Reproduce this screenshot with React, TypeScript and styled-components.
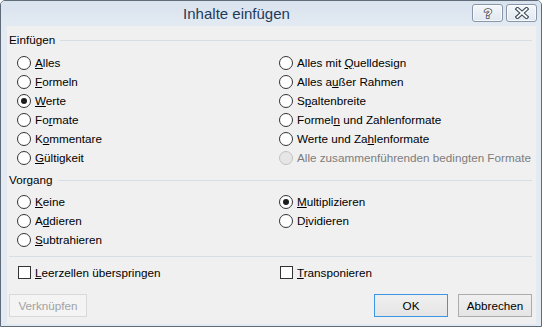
import React from "react";
import styled, { createGlobalStyle } from "styled-components";

const Global = createGlobalStyle`
  html, body { margin: 0; padding: 0; background: #ffffff; }
  body { font-family: "Liberation Sans", Arial, sans-serif; font-size: 11.7px; color: #000; }
  * { box-sizing: border-box; }
`;

const Window = styled.div`
  width: 542px;
  height: 327px;
  border: 1px solid #5f6b78;
  border-radius: 5px 5px 0 0;
  background: #e3eaf2;
  display: flex;
  flex-direction: column;
  overflow: hidden;
`;

const TitleBar = styled.div`
  height: 25px;
  flex: none;
  display: flex;
  align-items: flex-start;
  padding-right: 4px;
  background: linear-gradient(#d9e3ee, #e3eaf2);
`;

const Title = styled.div`
  flex: 1;
  text-align: center;
  font-size: 15px;
  line-height: 25px;
  color: #1f3a5a;
`;

const CaptionButtons = styled.div`
  display: flex;
  gap: 3px;
  margin-top: 3px;
`;

const CaptionButton = styled.div`
  width: 31px;
  height: 18px;
  border: 1px solid #8796a9;
  border-radius: 3px;
  background: linear-gradient(#f4f7fa, #e1e8f0);
  box-shadow: inset 0 0 0 1px rgba(255, 255, 255, 0.7);
  display: flex;
  align-items: center;
  justify-content: center;
`;

const Client = styled.div`
  flex: 1;
  margin: 0 5px 2px 6px;
  background: #f0f0f0;
  padding: 6px 4px 0 2px;
  display: flex;
  flex-direction: column;
`;

const GroupHeader = styled.div<{ $top?: number }>`
  height: 16px;
  display: flex;
  align-items: center;
  margin-top: ${(p) => p.$top ?? 0}px;
`;

const GroupLabel = styled.span`
  line-height: 16px;
`;

const GroupLine = styled.div`
  flex: 1;
  height: 1px;
  margin-left: 5px;
  background: #d5dfe5;
`;

const OptionGrid = styled.div<{ $rows: number; $top: number }>`
  display: grid;
  grid-template-columns: 262px 1fr;
  grid-template-rows: repeat(${(p) => p.$rows}, 19px);
  grid-auto-flow: column;
  padding-left: 8px;
  margin-top: ${(p) => p.$top}px;
`;

const Option = styled.label<{ $disabled?: boolean }>`
  display: flex;
  align-items: center;
  gap: 4px;
  height: 19px;
  white-space: nowrap;
  color: ${(p) => (p.$disabled ? "#7d7d7d" : "#000")};
`;

const RadioCircle = styled.span<{ $checked?: boolean; $disabled?: boolean }>`
  width: 14px;
  height: 14px;
  flex: none;
  border-radius: 50%;
  border: 1px solid ${(p) => (p.$disabled ? "#c2c2c2" : "#333333")};
  background: ${(p) => (p.$disabled ? "#e6e6e6" : "#ffffff")};
  display: flex;
  align-items: center;
  justify-content: center;
  &::after {
    content: "";
    display: ${(p) => (p.$checked ? "block" : "none")};
    width: 6px;
    height: 6px;
    border-radius: 50%;
    background: #1c1c1c;
  }
`;

const CheckBox = styled.span`
  width: 13px;
  height: 13px;
  flex: none;
  border: 1px solid #333333;
  background: #ffffff;
`;

const Key = styled.u`
  text-decoration: underline;
  text-underline-offset: 1px;
`;

const Separator = styled.div`
  height: 1px;
  background: #d5dfe5;
  margin-top: 7px;
`;

const CheckRow = styled.div`
  display: grid;
  grid-template-columns: 262px 1fr;
  padding-left: 9px;
  margin-top: 6px;
`;

const ButtonRow = styled.div`
  display: flex;
  gap: 10px;
  margin-top: 12px;
`;

const Button = styled.div<{ $w: number; $variant?: "default" | "disabled" }>`
  width: ${(p) => p.$w}px;
  height: 23px;
  display: flex;
  align-items: center;
  justify-content: center;
  border: 1px solid
    ${(p) =>
      p.$variant === "default" ? "#3b97e6" : p.$variant === "disabled" ? "#d9d9d9" : "#acacac"};
  background: ${(p) =>
    p.$variant === "disabled" ? "#f4f4f4" : "linear-gradient(#f0f0f0, #e5e5e5)"};
  color: ${(p) => (p.$variant === "disabled" ? "#a2a2a2" : "#000")};
`;

const Spacer = styled.div`
  flex: 1;
`;

type Opt = { label: React.ReactNode; checked?: boolean; disabled?: boolean };

const k = (before: string, key: string, after: string) => (
  <>
    {before}
    <Key>{key}</Key>
    {after}
  </>
);

const pasteOptions: Opt[] = [
  { label: k("", "A", "lles") },
  { label: k("", "F", "ormeln") },
  { label: k("", "W", "erte"), checked: true },
  { label: k("Fo", "r", "mate") },
  { label: k("K", "o", "mmentare") },
  { label: k("", "G", "ültigkeit") },
  { label: k("Alles mit ", "Q", "uelldesign") },
  { label: k("Alles a", "u", "ßer Rahmen") },
  { label: k("S", "p", "altenbreite") },
  { label: k("Formel", "n", " und Zahlenformate") },
  { label: k("Werte und Za", "h", "lenformate") },
  { label: "Alle zusammenführenden bedingten Formate", disabled: true },
];

const opOptions: Opt[] = [
  { label: k("", "K", "eine") },
  { label: k("A", "d", "dieren") },
  { label: k("", "S", "ubtrahieren") },
  { label: k("", "M", "ultiplizieren"), checked: true },
  { label: k("D", "i", "vidieren") },
];

const Radio = ({ o }: { o: Opt }) => (
  <Option $disabled={o.disabled}>
    <RadioCircle $checked={o.checked} $disabled={o.disabled} />
    <span>{o.label}</span>
  </Option>
);

export default function App() {
  return (
    <>
      <Global />
      <Window>
        <TitleBar>
          <Title>Inhalte einfügen</Title>
          <CaptionButtons>
            <CaptionButton>
              <svg width="14" height="14" viewBox="0 0 14 14">
                <text
                  x="7"
                  y="12"
                  textAnchor="middle"
                  fontFamily="Liberation Sans, Arial, sans-serif"
                  fontWeight="bold"
                  fontSize="13"
                  fill="#ffffff"
                  stroke="#3d4b5c"
                  strokeWidth="1.6"
                  paintOrder="stroke"
                >
                  ?
                </text>
              </svg>
            </CaptionButton>
            <CaptionButton>
              <svg width="14" height="12" viewBox="0 0 14 12">
                <path d="M2.5 2 L11.5 10 M11.5 2 L2.5 10" stroke="#3d4b5c" strokeWidth="4" strokeLinecap="square" fill="none" />
                <path d="M2.5 2 L11.5 10 M11.5 2 L2.5 10" stroke="#ffffff" strokeWidth="1.8" strokeLinecap="square" fill="none" />
              </svg>
            </CaptionButton>
          </CaptionButtons>
        </TitleBar>
        <Client>
          <GroupHeader>
            <GroupLabel>Einfügen</GroupLabel>
            <GroupLine />
          </GroupHeader>
          <OptionGrid $rows={6} $top={5}>
            {pasteOptions.map((o, i) => (
              <Radio key={i} o={o} />
            ))}
          </OptionGrid>
          <GroupHeader $top={5}>
            <GroupLabel>Vorgang</GroupLabel>
            <GroupLine />
          </GroupHeader>
          <OptionGrid $rows={3} $top={4}>
            {opOptions.map((o, i) => (
              <Radio key={i} o={o} />
            ))}
          </OptionGrid>
          <Separator />
          <CheckRow>
            <Option>
              <CheckBox />
              <span>{k("", "L", "eerzellen überspringen")}</span>
            </Option>
            <Option>
              <CheckBox />
              <span>{k("", "T", "ransponieren")}</span>
            </Option>
          </CheckRow>
          <ButtonRow>
            <Button $w={78} $variant="disabled">Verknüpfen</Button>
            <Spacer />
            <Button $w={74} $variant="default">OK</Button>
            <Button $w={74}>Abbrechen</Button>
          </ButtonRow>
        </Client>
      </Window>
    </>
  );
}
